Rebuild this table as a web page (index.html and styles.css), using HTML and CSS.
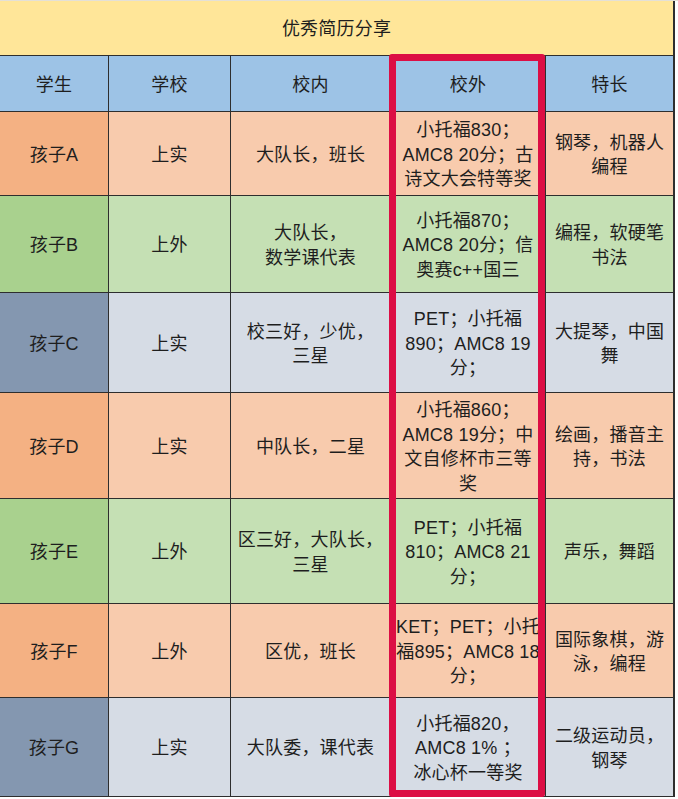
FILE: index.html
```html
<!DOCTYPE html>
<html lang="zh">
<head>
<meta charset="utf-8">
<title>优秀简历分享</title>
<link rel="stylesheet" href="styles.css">
</head>
<body>
<div class="page">
  <div class="sheet">
    <div class="cell title">优秀简历分享</div>

    <div class="cell head">学生</div>
    <div class="cell head">学校</div>
    <div class="cell head">校内</div>
    <div class="cell head">校外</div>
    <div class="cell head">特长</div>

    <div class="cell orange-dark">孩子A</div>
    <div class="cell orange">上实</div>
    <div class="cell orange">大队长，班长</div>
    <div class="cell orange"><span>小托福830；<br>AMC8 20分；古<br>诗文大会特等奖</span></div>
    <div class="cell orange"><span>钢琴，机器人<br>编程</span></div>

    <div class="cell green-dark">孩子B</div>
    <div class="cell green">上外</div>
    <div class="cell green"><span>大队长，<br>数学课代表</span></div>
    <div class="cell green"><span>小托福870；<br>AMC8 20分；信<br>奥赛c++国三</span></div>
    <div class="cell green"><span>编程，软硬笔<br>书法</span></div>

    <div class="cell blue-dark">孩子C</div>
    <div class="cell gray">上实</div>
    <div class="cell gray"><span>校三好，少优，<br>三星</span></div>
    <div class="cell gray"><span>PET；小托福<br>890；AMC8 19<br>分；</span></div>
    <div class="cell gray"><span>大提琴，中国<br>舞</span></div>

    <div class="cell orange-dark">孩子D</div>
    <div class="cell orange">上实</div>
    <div class="cell orange">中队长，二星</div>
    <div class="cell orange"><span>小托福860；<br>AMC8 19分；中<br>文自修杯市三等<br>奖</span></div>
    <div class="cell orange"><span>绘画，播音主<br>持，书法</span></div>

    <div class="cell green-dark">孩子E</div>
    <div class="cell green">上外</div>
    <div class="cell green"><span>区三好，大队长，<br>三星</span></div>
    <div class="cell green"><span>PET；小托福<br>810；AMC8 21<br>分；</span></div>
    <div class="cell green">声乐，舞蹈</div>

    <div class="cell orange-dark">孩子F</div>
    <div class="cell orange">上外</div>
    <div class="cell orange">区优，班长</div>
    <div class="cell orange"><span>KET；PET；小托<br>福895；AMC8 18<br>分；</span></div>
    <div class="cell orange"><span>国际象棋，游<br>泳，编程</span></div>

    <div class="cell blue-dark">孩子G</div>
    <div class="cell gray">上实</div>
    <div class="cell gray">大队委，课代表</div>
    <div class="cell gray"><span>小托福820，<br>AMC8 1% ；<br>冰心杯一等奖</span></div>
    <div class="cell gray"><span>二级运动员，<br>钢琴</span></div>
  </div>
  <div class="highlight"></div>
</div>
</body>
</html>
```

FILE: styles.css
```css
html, body {
  margin: 0;
  padding: 0;
  background: #ffffff;
}

body {
  font-family: "Liberation Sans", "Noto Sans CJK SC", sans-serif;
  font-size: 18px;
  color: #1e1e1e;
}

.page {
  position: relative;
  width: 678px;
  height: 799px;
  border-top: 1px solid #e4e0d6;
  box-sizing: border-box;
}

.sheet {
  display: grid;
  width: 674px;
  grid-template-columns: 108px 121px 159px 154px 127px;
  grid-template-rows: 54px 55px 83px 96px 99px 105px 104px 93px 98px;
  gap: 1px;
  padding: 0 1px 1px 0;
  background: #2e2e2e;
}

.cell {
  display: flex;
  align-items: center;
  justify-content: center;
  text-align: center;
  line-height: 24.5px;
  white-space: nowrap;
  overflow: hidden;
  letter-spacing: 0.2px;
  padding-top: 3px;
  box-sizing: border-box;
}

.title {
  grid-column: 1 / -1;
  background: #ffe699;
  font-size: 18px;
}

.head { background: #9dc3e6; }

.orange-dark { background: #f4b183; }
.orange { background: #f8cbad; }
.green-dark { background: #a9d18e; }
.green { background: #c5e0b4; }
.blue-dark { background: #8497b0; }
.gray { background: #d6dce5; }

.highlight {
  position: absolute;
  left: 389px;
  top: 53px;
  width: 156px;
  height: 743px;
  border: 7px solid #dc0e44;
  border-radius: 3px;
  box-sizing: border-box;
  pointer-events: none;
}
```
